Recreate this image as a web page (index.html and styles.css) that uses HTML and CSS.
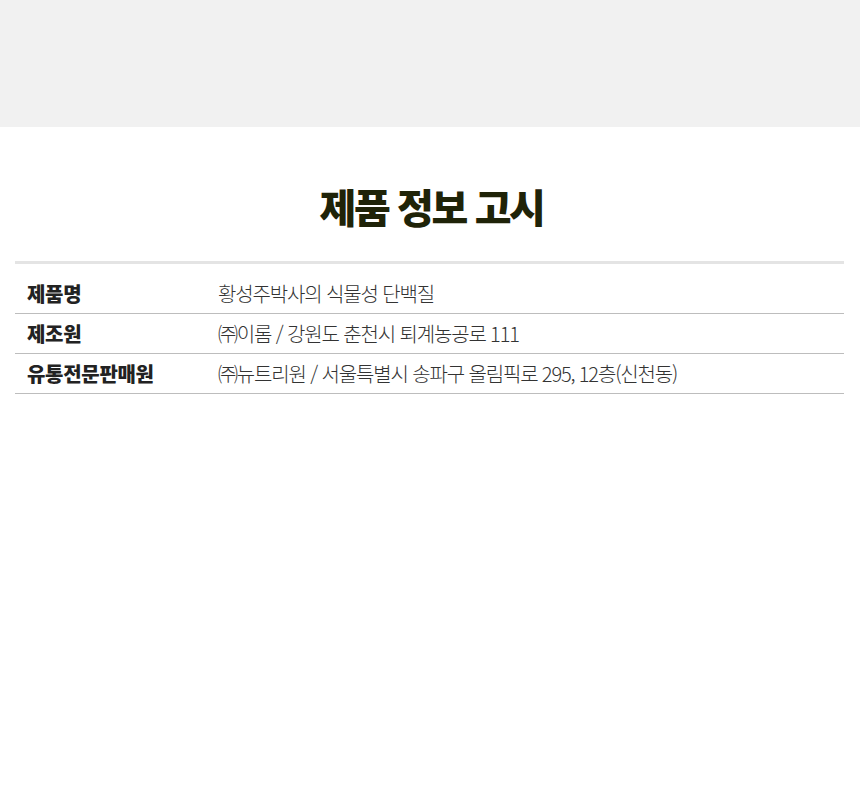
FILE: index.html
```html
<!DOCTYPE html>
<html lang="ko">
<head>
<meta charset="utf-8">
<link rel="stylesheet" href="styles.css">
</head>
<body>
<div class="band"></div>
<section class="notice">
  <h2 class="title">제품 정보 고시</h2>
  <div class="table">
    <div class="row">
      <div class="label">제품명</div>
      <div class="value">황성주박사의 식물성 단백질</div>
    </div>
    <div class="row">
      <div class="label">제조원</div>
      <div class="value">㈜이롬 / 강원도 춘천시 퇴계농공로 111</div>
    </div>
    <div class="row">
      <div class="label">유통전문판매원</div>
      <div class="value">㈜뉴트리원 / 서울특별시 송파구 올림픽로 295, 12층(신천동)</div>
    </div>
  </div>
</section>
</body>
</html>
```

FILE: styles.css
```css
html, body {
  margin: 0;
  padding: 0;
  background: #ffffff;
  font-family: "Noto Sans CJK KR", "Noto Sans", sans-serif;
}
.band {
  height: 127px;
  background: #f1f1f1;
}
.notice {
  padding: 0 16px 0 15px;
}
.title {
  margin: 0;
  padding: 59px 0 0 4px;
  height: 75px;
  line-height: 40px;
  font-size: 40px;
  font-weight: 900;
  letter-spacing: -2.4px;
  text-align: center;
  color: #1f2308;
}
.table {
  border-top: 3px solid #e4e4e4;
  padding-top: 9px;
}
.row {
  display: flex;
  align-items: center;
  height: 40px;
  border-bottom: 1px solid #bdbdbd;
}
.row + .row {
  height: 39px;
}
.label {
  width: 191px;
  padding-left: 12px;
  font-size: 20px;
  font-weight: 800;
  letter-spacing: -0.3px;
  color: #222222;
}
.value {
  font-size: 20px;
  font-weight: 300;
  letter-spacing: -1.15px;
  color: #333333;
}
```
